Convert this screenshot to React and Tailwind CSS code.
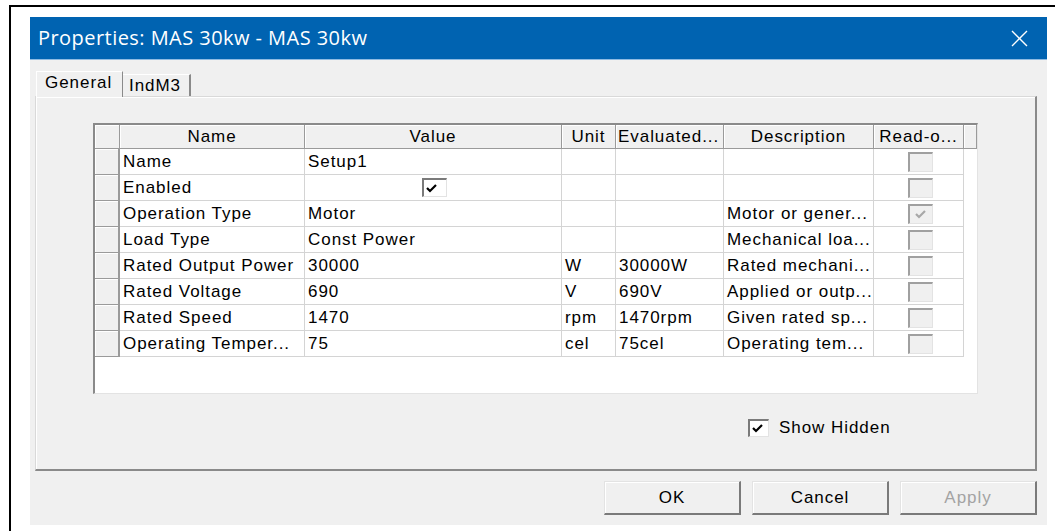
const rows = [
  { name: "Name", value: "Setup1", unit: "", evaluated: "", desc: "" },
  { name: "Enabled", check: true, unit: "", evaluated: "", desc: "" },
  { name: "Operation Type", value: "Motor", unit: "", evaluated: "", desc: "Motor or gener...", ro: true },
  { name: "Load Type", value: "Const Power", unit: "", evaluated: "", desc: "Mechanical loa..." },
  { name: "Rated Output Power", value: "30000", unit: "W", evaluated: "30000W", desc: "Rated mechani..." },
  { name: "Rated Voltage", value: "690", unit: "V", evaluated: "690V", desc: "Applied or outp..." },
  { name: "Rated Speed", value: "1470", unit: "rpm", evaluated: "1470rpm", desc: "Given rated sp..." },
  { name: "Operating Temper...", value: "75", unit: "cel", evaluated: "75cel", desc: "Operating tem..." },
];

const headers = ["", "Name", "Value", "Unit", "Evaluated...", "Description", "Read-o...", ""];

const cols = "grid grid-cols-[25px_185px_257px_54px_108px_150px_90px_13px]";

const Tick = ({ color = "#000" }) => (
  <svg width="13" height="12" viewBox="0 0 13 12" className="block">
    <path d="M2 6 L5 9 L11 3" fill="none" stroke={color} strokeWidth="2.2" />
  </svg>
);

const Cell = ({ children, className = "" }) => (
  <div className={`h-[26px] flex items-center pl-[3px] border-r border-b border-[#d4d4d4] whitespace-nowrap overflow-hidden ${className}`}>
    {children}
  </div>
);

const App = () => {
  return (
    <div className="w-[1059px] h-[531px] bg-white overflow-hidden font-['Liberation_Sans',Arial,sans-serif] text-[17px] tracking-[0.95px] text-black">
      {/* outer window frame */}
      <div className="ml-[9px] mt-[5px] w-[1046px] h-[526px] border-t-2 border-l-2 border-black">
        <div className="ml-[19px] mt-[10px] w-[1017px] h-[508px] bg-[#f0f0f0] flex flex-col">
          {/* title bar */}
          <div className="h-[43px] bg-[#0063b1] border-b border-[#8fbbe2] flex items-center justify-between pl-[8px] pr-[19px]">
            <span className="font-['Open_Sans',sans-serif] text-[20px] tracking-[0.45px] text-white">
              Properties: MAS 30kw - MAS 30kw
            </span>
            <svg width="17" height="17" viewBox="0 0 17 17">
              <path d="M1 1 L16 16 M16 1 L1 16" stroke="#fff" strokeWidth="1.4" />
            </svg>
          </div>

          <div className="pl-[5px] pr-[10px] flex flex-col">
            {/* tabs */}
            <div className="mt-[11px] h-[26px] flex items-end pl-[1px]">
              <div className="relative z-10 h-[26px] w-[87px] bg-[#f0f0f0] border-t border-l border-white border-r border-r-[#8a8a8a] pl-[8px] leading-[22px]">
                General
              </div>
              <div className="h-[23px] w-[68px] border-t border-white border-r-2 border-r-[#8a8a8a] pl-[6px] leading-[22px]">
                IndM3
              </div>
            </div>

            {/* tab page */}
            <div className="-mt-px h-[375px] border-t border-l border-[#d9d9d9] border-r-2 border-b-2 border-r-[#8a8a8a] border-b-[#8a8a8a] shadow-[inset_1px_1px_0_#fff] flex flex-col">
              {/* property grid */}
              <div className="ml-[57px] mt-[26px] w-[885px] h-[271px] bg-white border-t-2 border-l-2 border-[#8a8a8a] border-r border-b border-r-[#e3e3e3] border-b-[#e3e3e3] overflow-hidden">
                <div className={cols}>
                  {headers.map((h, i) => (
                    <div
                      key={i}
                      className={`h-[24px] flex items-center justify-center bg-[#f0f0f0] border-r border-b border-[#9a9a9a] shadow-[inset_1px_1px_0_#fff] whitespace-nowrap overflow-hidden ${i === 4 ? "justify-start pl-[2px]" : ""}`}
                    >
                      {h}
                    </div>
                  ))}
                </div>
                {rows.map((r, idx) => (
                  <div key={idx} className={cols}>
                    <div className="h-[26px] bg-[#f0f0f0] border-r-2 border-b border-[#9a9a9a] shadow-[inset_1px_1px_0_#fff]" />
                    <Cell>{r.name}</Cell>
                    <Cell className={r.check ? "justify-center pl-0" : ""}>
                      {r.check ? (
                        <div className="w-[25px] h-[19px] bg-white border-t-2 border-l-2 border-[#7a7a7a] border-r border-b border-r-[#e3e3e3] border-b-[#e3e3e3] pl-[1px] pt-[2px]">
                          <Tick />
                        </div>
                      ) : (
                        r.value
                      )}
                    </Cell>
                    <Cell>{r.unit}</Cell>
                    <Cell>{r.evaluated}</Cell>
                    <Cell>{r.desc}</Cell>
                    <Cell className="justify-center pl-0">
                      <div className="w-[25px] h-[20px] bg-[#f0f0f0] border-t-2 border-l-2 border-[#a0a0a0] border-r border-b border-r-[#e3e3e3] border-b-[#e3e3e3] flex items-center justify-center">
                        {r.ro && <Tick color="#a8a8a8" />}
                      </div>
                    </Cell>
                    <div />
                  </div>
                ))}
              </div>

              {/* show hidden option */}
              <div className="ml-[712px] mt-[21px] flex items-center gap-[10px]">
                <div className="w-[21px] h-[18px] bg-white border-t-2 border-l-2 border-[#7a7a7a] border-r border-b border-r-[#e3e3e3] border-b-[#e3e3e3] pl-[1px] pt-[1px]">
                  <Tick />
                </div>
                <span>Show Hidden</span>
              </div>
            </div>

            {/* dialog buttons */}
            <div className="mt-[10px] flex justify-end gap-[11px]">
              {["OK", "Cancel", "Apply"].map((b) => (
                <button
                  key={b}
                  className={`w-[137px] h-[34px] bg-[#f0f0f0] border-t border-l border-[#e3e3e3] border-r-2 border-b-2 border-r-[#7a7a7a] border-b-[#7a7a7a] shadow-[inset_1px_1px_0_#fff] ${b === "Apply" ? "text-[#a3a3a3]" : ""}`}
                >
                  {b}
                </button>
              ))}
            </div>
          </div>
        </div>
      </div>
    </div>
  );
};

export default App;
